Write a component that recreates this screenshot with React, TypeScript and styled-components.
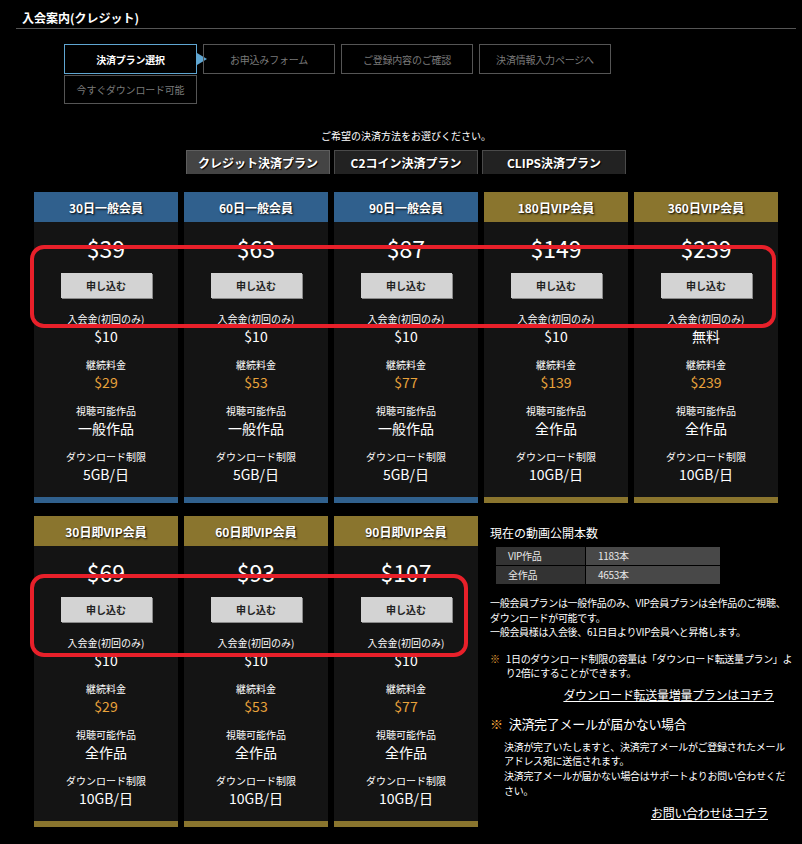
import React from 'react';
import styled, { createGlobalStyle } from 'styled-components';

const COLORS = {
  bg: '#000000',
  card: '#141414',
  blue: '#30608d',
  gold: '#8a752e',
  orange: '#e9a33b',
  accent: '#5fa6d2',
  line: '#555555',
  red: '#e8202a',
};

const GlobalStyle = createGlobalStyle`
  body {
    margin: 0;
    background: ${COLORS.bg};
    color: #ffffff;
    font-family: "Noto Sans CJK JP", "Noto Sans", sans-serif;
  }
`;

const Page = styled.div`
  width: 802px;
  padding: 10px 6px 20px 16px;
  box-sizing: border-box;
`;

const Title = styled.h2`
  margin: 0;
  padding: 0 0 2px 6px;
  font-size: 12px;
  line-height: 16px;
  font-weight: bold;
  border-bottom: 1px solid ${COLORS.line};
`;

const Steps = styled.div`
  margin: 15px 0 0 48px;
  display: flex;
  flex-direction: column;
  gap: 1px;
`;

const StepRow = styled.div`
  display: flex;
  gap: 6px;
`;

const StepBox = styled.div<{ $active?: boolean; $short?: boolean }>`
  position: relative;
  width: 133px;
  height: ${(p) => (p.$short ? 29 : 30)}px;
  box-sizing: border-box;
  border: 1px solid ${(p) => (p.$active ? COLORS.accent : COLORS.line)};
  display: flex;
  align-items: center;
  justify-content: center;
  font-size: 10px;
  letter-spacing: -0.2px;
  font-weight: ${(p) => (p.$active ? 'bold' : 'normal')};
  color: ${(p) => (p.$active ? '#ffffff' : '#7a7a7a')};
  & + & {
    width: 132px;
  }
`;

const Arrow = styled.span`
  position: absolute;
  right: -11px;
  top: 8px;
  width: 0;
  height: 0;
  border-top: 6px solid transparent;
  border-bottom: 6px solid transparent;
  border-left: 10px solid ${COLORS.accent};
`;

const Notice = styled.p`
  margin: 25px 0 0;
  text-align: center;
  font-size: 10px;
  line-height: 14px;
`;

const Tabs = styled.div`
  margin-top: 7px;
  display: flex;
  justify-content: center;
  gap: 4px;
`;

const Tab = styled.div<{ $active?: boolean }>`
  width: 144px;
  height: 24px;
  box-sizing: border-box;
  background: ${(p) => (p.$active ? '#444444' : '#222222')};
  border: 1px solid ${(p) => (p.$active ? '#5e5e5e' : '#4a4a4a')};
  border-bottom: none;
  display: flex;
  align-items: center;
  justify-content: center;
  font-size: 12px;
  font-weight: bold;
  text-shadow: 1px 1px 1px #000;
`;

const Grid = styled.div`
  position: relative;
  margin: 18px 0 0 18px;
  width: 744px;
  display: grid;
  grid-template-columns: repeat(5, 144px);
  column-gap: 6px;
  row-gap: 13px;
`;

const Card = styled.div<{ $tone: 'blue' | 'gold' }>`
  background: ${COLORS.card};
  border-bottom: 6px solid ${(p) => (p.$tone === 'blue' ? COLORS.blue : COLORS.gold)};
  display: flex;
  flex-direction: column;
  align-items: center;
  padding-bottom: 14px;
`;

const CardHead = styled.div<{ $tone: 'blue' | 'gold' }>`
  align-self: stretch;
  height: 30px;
  background: ${(p) => (p.$tone === 'blue' ? COLORS.blue : COLORS.gold)};
  display: flex;
  align-items: center;
  justify-content: center;
  font-size: 12px;
  font-weight: bold;
  text-shadow: 1px 1px 2px #000;
`;

const Price = styled.div`
  margin-top: 11px;
  font-size: 23px;
  line-height: 30px;
`;

const ApplyButton = styled.button`
  margin-top: 10px;
  width: 91px;
  height: 25px;
  border: none;
  background: #d3d3d3;
  box-shadow: 1px 1px 0 #8a8a8a;
  color: #222;
  font-family: inherit;
  font-size: 10px;
  font-weight: bold;
  cursor: pointer;
`;

const Label = styled.div<{ $gap: number }>`
  margin-top: ${(p) => p.$gap}px;
  font-size: 10px;
  line-height: 14px;
`;

const Value = styled.div<{ $accent?: boolean }>`
  margin-top: 1px;
  font-size: 14px;
  line-height: 18px;
  color: ${(p) => (p.$accent ? COLORS.orange : '#ffffff')};
`;

const Info = styled.div`
  grid-column: 4 / span 2;
  padding: 9px 0 0 6px;
  font-size: 10px;
  line-height: 14.5px;
  letter-spacing: -0.3px;
  white-space: nowrap;
`;

const InfoTitle = styled.div`
  font-size: 12px;
  line-height: 16px;
  letter-spacing: 0;
`;

const CountTable = styled.div`
  margin: 6px 0 0 6px;
  width: 224px;
  display: grid;
  grid-template-columns: 89px 1fr;
  gap: 1px;
`;

const CountCell = styled.div<{ $dark?: boolean }>`
  height: 18px;
  background: ${(p) => (p.$dark ? '#333333' : '#484848')};
  padding-left: 12px;
  display: flex;
  align-items: center;
  font-size: 10px;
  color: #e8e8e8;
`;

const Para = styled.p`
  margin: 12px 0 0;
`;

const Note = styled.div<{ $big?: boolean; $gap: number }>`
  margin-top: ${(p) => p.$gap}px;
  display: flex;
  gap: 6px;
  font-size: ${(p) => (p.$big ? 13 : 10)}px;
  line-height: ${(p) => (p.$big ? 18 : 14.5)}px;
`;

const Mark = styled.span`
  color: ${COLORS.orange};
  flex: none;
`;

const NoteBody = styled.div`
  margin: 7px 10px 0 14px;
  line-height: 14.8px;
`;

const LinkRow = styled.div<{ $size: number; $gap: number; $right: number }>`
  margin: ${(p) => p.$gap}px ${(p) => p.$right}px 0 0;
  text-align: right;
  font-size: ${(p) => p.$size}px;
  line-height: 18px;
  a {
    color: #ffffff;
  }
`;

const Highlight = styled.div<{ $top: number; $width: number }>`
  position: absolute;
  left: -4px;
  top: ${(p) => p.$top}px;
  width: ${(p) => p.$width}px;
  height: 83px;
  box-sizing: border-box;
  border: 4px solid ${COLORS.red};
  border-radius: 14px;
  pointer-events: none;
`;

type Plan = {
  name: string;
  tone: 'blue' | 'gold';
  price: string;
  fee: string;
  monthly: string;
  works: string;
  limit: string;
};

const PLANS: Plan[] = [
  { name: '30日一般会員', tone: 'blue', price: '$39', fee: '$10', monthly: '$29', works: '一般作品', limit: '5GB/日' },
  { name: '60日一般会員', tone: 'blue', price: '$63', fee: '$10', monthly: '$53', works: '一般作品', limit: '5GB/日' },
  { name: '90日一般会員', tone: 'blue', price: '$87', fee: '$10', monthly: '$77', works: '一般作品', limit: '5GB/日' },
  { name: '180日VIP会員', tone: 'gold', price: '$149', fee: '$10', monthly: '$139', works: '全作品', limit: '10GB/日' },
  { name: '360日VIP会員', tone: 'gold', price: '$239', fee: '無料', monthly: '$239', works: '全作品', limit: '10GB/日' },
  { name: '30日即VIP会員', tone: 'gold', price: '$69', fee: '$10', monthly: '$29', works: '全作品', limit: '10GB/日' },
  { name: '60日即VIP会員', tone: 'gold', price: '$93', fee: '$10', monthly: '$53', works: '全作品', limit: '10GB/日' },
  { name: '90日即VIP会員', tone: 'gold', price: '$107', fee: '$10', monthly: '$77', works: '全作品', limit: '10GB/日' },
];

const PlanCard: React.FC<{ plan: Plan }> = ({ plan }) => (
  <Card $tone={plan.tone}>
    <CardHead $tone={plan.tone}>{plan.name}</CardHead>
    <Price>{plan.price}</Price>
    <ApplyButton>申し込む</ApplyButton>
    <Label $gap={14}>入会金(初回のみ)</Label>
    <Value>{plan.fee}</Value>
    <Label $gap={13}>継続料金</Label>
    <Value $accent>{plan.monthly}</Value>
    <Label $gap={13}>視聴可能作品</Label>
    <Value>{plan.works}</Value>
    <Label $gap={13}>ダウンロード制限</Label>
    <Value>{plan.limit}</Value>
  </Card>
);

const App: React.FC = () => (
  <Page>
    <GlobalStyle />
    <Title>入会案内(クレジット)</Title>

    <Steps>
      <StepRow>
        <StepBox $active>
          決済プラン選択
          <Arrow />
        </StepBox>
        <StepBox>お申込みフォーム</StepBox>
        <StepBox>ご登録内容のご確認</StepBox>
        <StepBox>決済情報入力ページへ</StepBox>
      </StepRow>
      <StepBox $short>今すぐダウンロード可能</StepBox>
    </Steps>

    <Notice>ご希望の決済方法をお選びください。</Notice>
    <Tabs>
      <Tab $active>クレジット決済プラン</Tab>
      <Tab>C2コイン決済プラン</Tab>
      <Tab>CLIPS決済プラン</Tab>
    </Tabs>

    <Grid>
      {PLANS.map((p) => (
        <PlanCard key={p.name} plan={p} />
      ))}
      <Info>
        <InfoTitle>現在の動画公開本数</InfoTitle>
        <CountTable>
          <CountCell $dark>VIP作品</CountCell>
          <CountCell>1183本</CountCell>
          <CountCell $dark>全作品</CountCell>
          <CountCell>4653本</CountCell>
        </CountTable>
        <Para>
          一般会員プランは一般作品のみ、VIP会員プランは全作品のご視聴、
          <br />
          ダウンロードが可能です。
          <br />
          一般会員様は入会後、61日目よりVIP会員へと昇格します。
        </Para>
        <Note $gap={12}>
          <Mark>※</Mark>
          <span>
            1日のダウンロード制限の容量は「ダウンロード転送量プラン」よ
            <br />
            り2倍にすることができます。
          </span>
        </Note>
        <LinkRow $size={12} $gap={5} $right={4}>
          <a href="#">ダウンロード転送量増量プランはコチラ</a>
        </LinkRow>
        <Note $big $gap={11}>
          <Mark>※</Mark>
          <span>決済完了メールが届かない場合</span>
        </Note>
        <NoteBody>
          決済が完了いたしますと、決済完了メールがご登録されたメール
          <br />
          アドレス宛に送信されます。
          <br />
          決済完了メールが届かない場合はサポートよりお問い合わせくだ
          <br />
          さい。
          <LinkRow $size={12} $gap={5} $right={0}>
            <a href="#">お問い合わせはコチラ</a>
          </LinkRow>
        </NoteBody>
      </Info>
      <Highlight $top={53} $width={746} />
      <Highlight $top={382} $width={438} />
    </Grid>
  </Page>
);

export default App;
